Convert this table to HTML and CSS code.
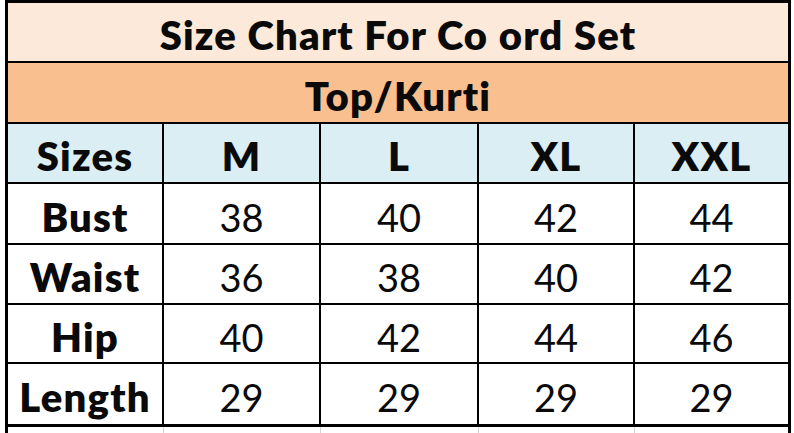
FILE: index.html
```html
<!DOCTYPE html>
<html lang="en">
<head>
<meta charset="utf-8">
<title>Size Chart For Co ord Set</title>
<link rel="stylesheet" href="styles.css">
</head>
<body>
<div class="sheet">
  <div class="row row-title"><div class="cell span">Size Chart For Co ord Set</div></div>
  <div class="row row-sub"><div class="cell span">Top/Kurti</div></div>
  <div class="row row-head">
    <div class="cell c1 bold">Sizes</div>
    <div class="cell c2 bold">M</div>
    <div class="cell c3 bold">L</div>
    <div class="cell c4 bold">XL</div>
    <div class="cell c5 bold">XXL</div>
  </div>
  <div class="row row-a">
    <div class="cell c1 bold">Bust</div>
    <div class="cell c2">38</div>
    <div class="cell c3">40</div>
    <div class="cell c4">42</div>
    <div class="cell c5">44</div>
  </div>
  <div class="row row-b">
    <div class="cell c1 bold">Waist</div>
    <div class="cell c2">36</div>
    <div class="cell c3">38</div>
    <div class="cell c4">40</div>
    <div class="cell c5">42</div>
  </div>
  <div class="row row-c">
    <div class="cell c1 bold">Hip</div>
    <div class="cell c2">40</div>
    <div class="cell c3">42</div>
    <div class="cell c4">44</div>
    <div class="cell c5">46</div>
  </div>
  <div class="row row-last">
    <div class="cell c1 bold">Length</div>
    <div class="cell c2">29</div>
    <div class="cell c3">29</div>
    <div class="cell c4">29</div>
    <div class="cell c5">29</div>
  </div>
  <div class="row row-extra">
    <div class="cell c1 grid"></div>
    <div class="cell c2 grid"></div>
    <div class="cell c3 grid"></div>
    <div class="cell c4 grid"></div>
    <div class="cell c5"></div>
  </div>
</div>
</body>
</html>
```

FILE: styles.css
```css
html, body {
  margin: 0;
  padding: 0;
  background: #ffffff;
  overflow: hidden;
}

body {
  font-family: Lato, "Open Sans", sans-serif;
  color: #0a0a0a;
}

.sheet {
  box-sizing: border-box;
  margin-left: 5px;
  width: 786px;
  border-top: 3px solid #000;
  border-left: 3px solid #000;
  border-right: 3px solid #000;
  display: flex;
  flex-direction: column;
}

.row {
  box-sizing: border-box;
  display: flex;
  border-bottom: 2px solid #000;
}

.cell {
  box-sizing: border-box;
  display: flex;
  align-items: center;
  justify-content: center;
  padding-top: 6px;
  font-size: 38px;
  font-weight: 400;
  white-space: nowrap;
}

.bold,
.span {
  font-weight: 800;
  font-size: 40px;
  letter-spacing: 1.2px;
}

.span { flex: 1; }

.c1 { width: 156px; border-right: 2px solid #000; }
.c2 { width: 157px; border-right: 2px solid #000; }
.c3 { width: 158px; border-right: 2px solid #000; }
.c4 { width: 156px; border-right: 2px solid #000; }
.c5 { width: 153px; }

.row-title { height: 60px; background: #fde9d9; }
.row-sub { height: 61px; background: #fabf8f; }
.row-head { height: 60px; background: #daeef3; }
.row-a { height: 61px; }
.row-b { height: 60px; }
.row-c { height: 59px; }
.row-last { height: 63px; border-bottom-width: 3px; }

.row-extra { height: 20px; border-bottom: none; }
.row-extra .cell { padding: 0; }
.row-extra .grid { border-right: 1px solid #d4d4d4; }
```
